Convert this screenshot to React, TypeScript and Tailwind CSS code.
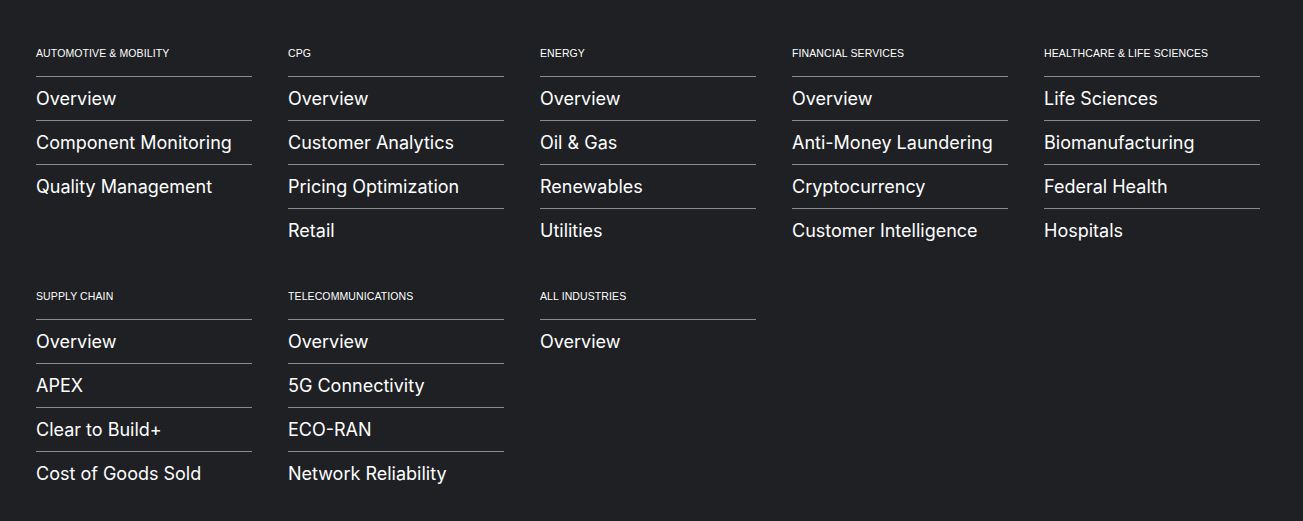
import React from "react";

type Group = { title: string; items: string[] };

const groups: Group[] = [
  { title: "Automotive & Mobility", items: ["Overview", "Component Monitoring", "Quality Management"] },
  { title: "CPG", items: ["Overview", "Customer Analytics", "Pricing Optimization", "Retail"] },
  { title: "Energy", items: ["Overview", "Oil & Gas", "Renewables", "Utilities"] },
  { title: "Financial Services", items: ["Overview", "Anti-Money Laundering", "Cryptocurrency", "Customer Intelligence"] },
  { title: "Healthcare & Life Sciences", items: ["Life Sciences", "Biomanufacturing", "Federal Health", "Hospitals"] },
  { title: "Supply Chain", items: ["Overview", "APEX", "Clear to Build+", "Cost of Goods Sold"] },
  { title: "Telecommunications", items: ["Overview", "5G Connectivity", "ECO-RAN", "Network Reliability"] },
  { title: "All Industries", items: ["Overview"] },
];

const App: React.FC = () => {
  return (
    <div className="min-h-screen bg-[#1e2024] text-white px-9 pt-[45px] pb-6">
      <div className="grid grid-cols-[repeat(5,216px)] gap-x-9 gap-y-9">
        {groups.map((g) => (
          <div key={g.title}>
            {/* Heading */}
            <div className="font-['Liberation_Sans',Arial,sans-serif] text-[10.5px] leading-4 tracking-[0.01em] uppercase mb-[15px]">
              {g.title}
            </div>
            <ul>
              {g.items.map((item) => (
                <li
                  key={item}
                  className="border-t border-[#8a8b8d] h-11 flex items-center font-['Inter',sans-serif] text-[18px] text-white"
                >
                  {item}
                </li>
              ))}
            </ul>
          </div>
        ))}
      </div>
    </div>
  );
};

export default App;
